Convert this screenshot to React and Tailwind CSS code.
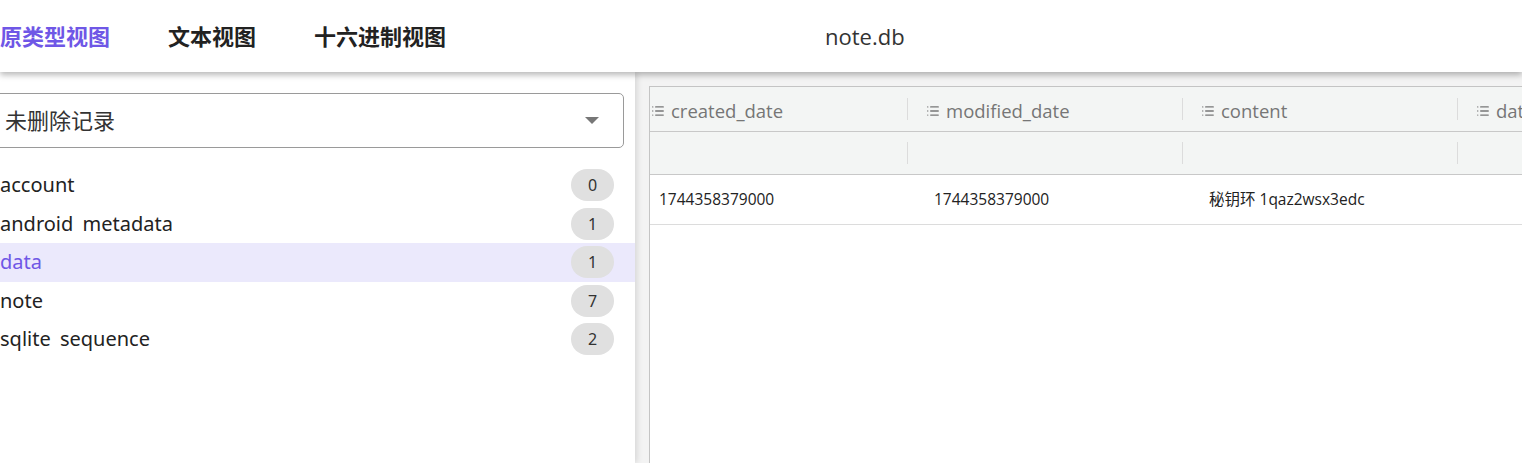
import { List } from 'lucide-react'

const tabs = ['原类型视图', '文本视图', '十六进制视图']

const tables = [
  { name: 'account', count: 0 },
  { name: 'android metadata', count: 1 },
  { name: 'data', count: 1 },
  { name: 'note', count: 7 },
  { name: 'sqlite sequence', count: 2 },
]

const columns = ['created_date', 'modified_date', 'content', 'data']

const rows = [['1744358379000', '1744358379000', '秘钥环 1qaz2wsx3edc', '']]

export default function App() {
  const active = 0
  const selected = 'data'

  return (
    <div
      className="w-[1522px] h-[463px] overflow-hidden flex flex-col bg-[#f3f3f3] text-[#222]"
      style={{ fontFamily: '"Open Sans", "Noto Sans CJK SC", sans-serif' }}
    >
      {/* top bar */}
      <header className="relative z-10 h-[72px] shrink-0 bg-white shadow-[0_3px_6px_rgba(0,0,0,0.28)] flex items-center">
        <nav className="flex items-center gap-[58px] font-bold text-[22px] -mt-[2px]" style={{ fontFamily: '"Noto Sans CJK SC", sans-serif' }}>
          {tabs.map((t, i) => (
            <span key={t} className={i === active ? 'text-[#6f57e6]' : 'text-[#222]'}>
              {t}
            </span>
          ))}
        </nav>
        <div className="absolute left-[825px] top-0 h-full flex items-center text-[22px] text-[#333]">note.db</div>
      </header>

      <main className="flex flex-1 min-h-0">
        {/* table list */}
        <aside className="w-[635px] shrink-0 bg-white pt-[21px] shadow-[2px_0_6px_rgba(0,0,0,0.12)]">
          <div className="-ml-[10px] w-[634px] h-[55px] border border-[#9a9a9a] rounded-[5px] flex items-center justify-between pl-[14px] pr-[24px]">
            <span className="text-[22px] text-[#333] -mt-[2px]" style={{ fontFamily: '"Noto Sans CJK SC", sans-serif' }}>未删除记录</span>
            <span className="w-0 h-0 border-l-[7px] border-r-[7px] border-t-[7px] border-l-transparent border-r-transparent border-t-[#777]" />
          </div>

          <ul className="mt-[18px]">
            {tables.map((t) => (
              <li
                key={t.name}
                className={`h-[38.5px] flex items-center justify-between pr-[21px] text-[20px] [word-spacing:4px] ${
                  t.name === selected ? 'bg-[#ebe9fc] text-[#6f57e6]' : 'text-[#222]'
                }`}
                style={{ fontFamily: '"Noto Sans", sans-serif' }}
              >
                <span>{t.name}</span>
                <span className="w-[43px] h-[32px] rounded-full bg-[#e0e0e0] flex items-center justify-center text-[16px] text-[#333]">
                  {t.count}
                </span>
              </li>
            ))}
          </ul>
        </aside>

        {/* data grid */}
        <section className="flex-1 min-w-0 pl-[14px] pt-[14px]">
          <div className="h-full bg-white border-l border-t border-[#c4c4c4] overflow-hidden">
            <div className="flex h-[45px] bg-[#f3f5f4] border-b border-[#c8c8c8]">
              {columns.map((c) => (
                <div key={c} className="w-[275px] shrink-0 flex items-center pl-[1px]">
                  <div className="flex-1 flex items-center gap-[6px] text-[18.5px] text-[#767676] pt-[3px]">
                    <List size={14} strokeWidth={2.25} className="text-[#777]" />
                    <span>{c}</span>
                  </div>
                  <div className="w-px h-[22px] bg-[#dcdcdc] mr-[17px]" />
                </div>
              ))}
            </div>
            <div className="flex h-[43px] bg-[#f3f5f4] border-b border-[#c8c8c8]">
              {columns.map((c) => (
                <div key={c} className="w-[275px] shrink-0 flex items-center justify-end">
                  <div className="w-px h-[22px] bg-[#dcdcdc] mr-[17px]" />
                </div>
              ))}
            </div>
            {rows.map((r, i) => (
              <div key={i} className="flex h-[50px] border-b border-[#dcdcdc]">
                {r.map((v, j) => (
                  <div
                    key={j}
                    className="w-[275px] shrink-0 flex items-center pl-[9px] text-[15.5px] text-[#222]"
                  >
                    {v}
                  </div>
                ))}
              </div>
            ))}
          </div>
        </section>
      </main>
    </div>
  )
}
